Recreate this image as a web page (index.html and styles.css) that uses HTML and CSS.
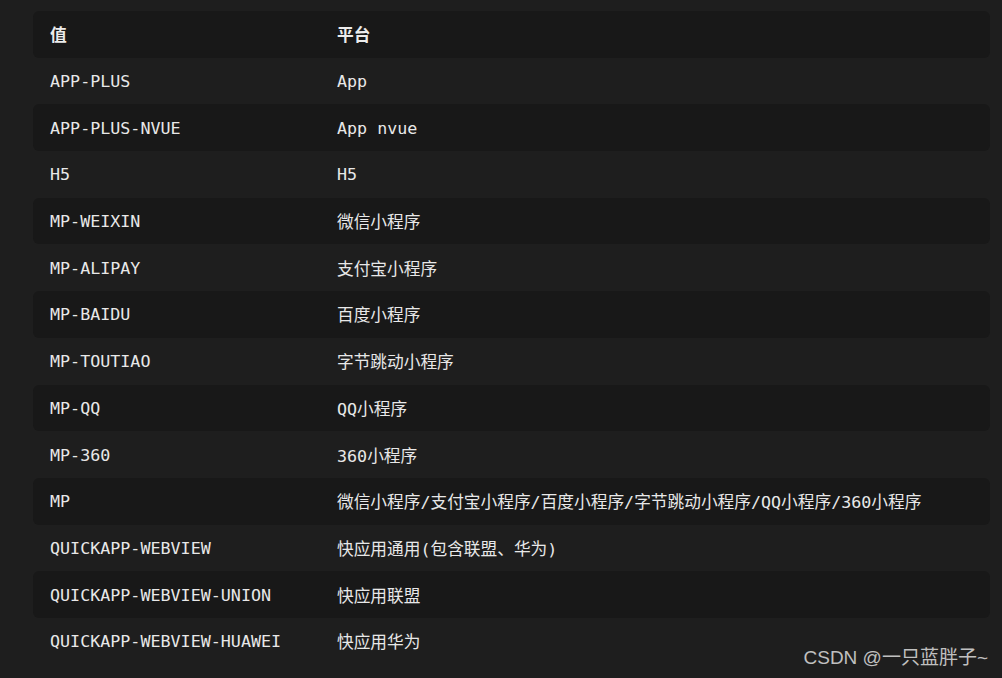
FILE: index.html
```html
<!DOCTYPE html>
<html lang="zh-CN">
<head>
<meta charset="utf-8">
<title>平台值</title>
<link rel="stylesheet" href="styles.css">
</head>
<body>
<div class="table">
  <div class="row head"><div class="c1">值</div><div class="c2">平台</div></div>
  <div class="row"><div class="c1">APP-PLUS</div><div class="c2">App</div></div>
  <div class="row"><div class="c1">APP-PLUS-NVUE</div><div class="c2">App nvue</div></div>
  <div class="row"><div class="c1">H5</div><div class="c2">H5</div></div>
  <div class="row"><div class="c1">MP-WEIXIN</div><div class="c2">微信小程序</div></div>
  <div class="row"><div class="c1">MP-ALIPAY</div><div class="c2">支付宝小程序</div></div>
  <div class="row"><div class="c1">MP-BAIDU</div><div class="c2">百度小程序</div></div>
  <div class="row"><div class="c1">MP-TOUTIAO</div><div class="c2">字节跳动小程序</div></div>
  <div class="row"><div class="c1">MP-QQ</div><div class="c2">QQ小程序</div></div>
  <div class="row"><div class="c1">MP-360</div><div class="c2">360小程序</div></div>
  <div class="row"><div class="c1">MP</div><div class="c2">微信小程序/支付宝小程序/百度小程序/字节跳动小程序/QQ小程序/360小程序</div></div>
  <div class="row"><div class="c1">QUICKAPP-WEBVIEW</div><div class="c2">快应用通用(包含联盟、华为)</div></div>
  <div class="row"><div class="c1">QUICKAPP-WEBVIEW-UNION</div><div class="c2">快应用联盟</div></div>
  <div class="row"><div class="c1">QUICKAPP-WEBVIEW-HUAWEI</div><div class="c2">快应用华为</div></div>
</div>
<div class="watermark">CSDN @一只蓝胖子~</div>
</body>
</html>
```
FILE: styles.css
```css
html, body {
  margin: 0;
  height: 100%;
}
body {
  background: #1e1e1e;
  color: #e8e8e8;
  font-family: "DejaVu Sans Mono", "Noto Sans CJK SC", monospace;
  font-size: 16.7px;
  padding: 11px 12px 0 33px;
  box-sizing: border-box;
  overflow: hidden;
  position: relative;
}
.table {
  display: flex;
  flex-direction: column;
}
.row {
  display: grid;
  grid-template-columns: 287px 1fr;
  height: 46.7px;
  align-items: center;
  border-radius: 6px;
}
.row:nth-child(odd) {
  background: #181818;
}
.c1, .c2 {
  padding-left: 17px;
  white-space: nowrap;
}
.head {
  font-weight: bold;
  color: #ececec;
}
.head .c1, .head .c2 {
  font-family: "Noto Sans CJK SC", sans-serif;
}
.watermark {
  position: absolute;
  right: 14px;
  bottom: 9px;
  font-family: "Liberation Sans", "Noto Sans CJK SC", sans-serif;
  font-size: 19px;
  color: #c0c0c0;
}
```
